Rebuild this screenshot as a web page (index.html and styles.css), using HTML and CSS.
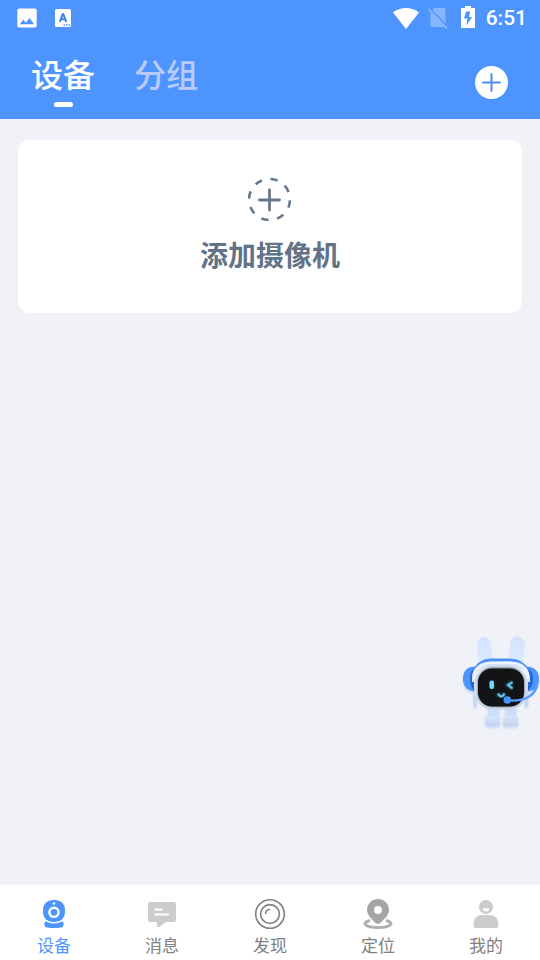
FILE: index.html
```html
<!DOCTYPE html>
<html lang="zh-CN">
<head>
<meta charset="utf-8">
<meta name="viewport" content="width=device-width, initial-scale=1">
<title>设备</title>
<link rel="stylesheet" href="styles.css">
</head>
<body>
<div class="app">
  <header class="header">
    <div class="status">
      <svg width="20" height="20" viewBox="0 0 20 20"><path fill="#fff" fill-rule="evenodd" d="M2 .5h16a1.700 1.700 0 0 1 1.700 1.700v15.600a1.700 1.700 0 0 1-1.700 1.700H2a1.700 1.700 0 0 1-1.700-1.700V2.200A1.700 1.700 0 0 1 2 .500zM2.800 16.200h14.400l-4.700-6.200-3.700 4.700-2.500-3z"/></svg>
      <svg class="lang-icon" width="16" height="18" viewBox="0 0 16 18"><rect width="16" height="18" rx="1.500" fill="#fff"/><path d="M4.800 12.800 7.700 5h.6l2.900 7.800M5.800 10.300h4.400" fill="none" stroke="#3f82e8" stroke-width="2" stroke-linejoin="bevel"/><path d="M8.500 16h1.500m1 0h1.500m1 0h1.500" stroke="#4d94ff" stroke-width="1.500"/></svg>
      <div class="status-right">
        <svg width="26" height="22" viewBox="0 0 26 22"><path fill="#fff" d="M0 5.500C7-.5 19-.5 26 5.500L13 22z"/></svg>
        <svg class="sim-icon" width="20" height="22" viewBox="0 0 20 22"><path fill="#fff" fill-opacity=".32" d="M6.500 1H16a1.500 1.500 0 0 1 1.500 1.500v14L4.500 3zM2.500 5.500 16.500 20H4a1.500 1.500 0 0 1-1.500-1.500z"/><path d="M.5 2 19 21.500" stroke="#fff" stroke-opacity=".4" stroke-width="1.500"/></svg>
        <svg width="14" height="24" viewBox="0 0 14 24"><path fill="#fff" fill-rule="evenodd" d="M4 0h6v2h4v20H0V2h4zM9 5.500H5L3 12.500h3.300l-.8 7L11 11H8z"/></svg>
        <span class="clock">6:51</span>
      </div>
    </div>
    <nav class="tabs">
      <button class="tab tab-active" type="button">设备</button>
      <button class="tab" type="button">分组</button>
      <button class="add" type="button" aria-label="添加">
        <svg width="33" height="33" viewBox="0 0 33 33"><circle cx="16.500" cy="16.500" r="16.500" fill="#fff"/><path d="M8 16.500h17M16.500 8v17" stroke="#4d8ff0" stroke-width="2" stroke-linecap="round"/></svg>
      </button>
    </nav>
  </header>
  <main class="content">
    <button class="card" type="button">
      <svg width="44" height="44" viewBox="0 0 44 44"><circle cx="21.500" cy="22.500" r="20.500" fill="none" stroke="#66788a" stroke-width="2.600" pathLength="80" stroke-dasharray="4.600 5.400" stroke-dashoffset="-.6"/><path d="M11.500 23h20M21.500 13v20" stroke="#66788a" stroke-width="2.800" stroke-linecap="round"/></svg>
      <span>添加摄像机</span>
    </button>
  </main>
  <button class="assistant" type="button" aria-label="客服">
    <svg width="90" height="110" viewBox="0 0 90 110">
      <defs>
        <linearGradient id="ear" x1="0" y1="0" x2="0" y2="1"><stop offset="0" stop-color="#d3e2fd"/><stop offset="1" stop-color="#dce9ff"/></linearGradient>
        <linearGradient id="foot" x1="0" y1="0" x2="0" y2="1"><stop offset="0" stop-color="#d6e5ff"/><stop offset="1" stop-color="#c3d3ee"/></linearGradient>
        <linearGradient id="helmet" x1="0" y1="0" x2="0" y2="1"><stop offset="0" stop-color="#cfdcf0"/><stop offset=".5" stop-color="#e6eefb"/><stop offset="1" stop-color="#d3e0f5"/></linearGradient>
        <filter id="soft" x="-30%" y="-30%" width="160%" height="160%"><feDropShadow dx="0" dy="2" stdDeviation="1.500" flood-color="#9fbdf0" flood-opacity=".5"/></filter>
        <filter id="edge"><feGaussianBlur stdDeviation=".8"/></filter>
      </defs>
      <g filter="url(#soft)">
        <path fill="url(#ear)" d="M28 18c0-8 12-8 12 0l2 20H30zM61 17c1-8 13-7 13 1l-3 20H60z"/>
        <rect x="38" y="80" width="11" height="14" fill="#cddefc"/><rect x="55" y="80" width="11" height="14" fill="#cddefc"/>
        <rect x="35" y="91" width="15" height="10" rx="3" fill="url(#foot)"/><rect x="53" y="91" width="15" height="10" rx="3" fill="url(#foot)"/>
        <path fill="#c5d5f0" d="M23.500 64v15q0 3 3 3V64zM78 64v15q0 3-3 3V64z"/>
        <path fill="#4d94ff" d="M25 41.500C15 42 13 48 13 54s3 12 12 12.500z"/>
        <path fill="#4d94ff" d="M77 41.500c9 .5 12 6.500 12 12.500s-3 12-12 12.500z"/>
      </g>
      <path fill="#2468d4" d="M24 43.500q-4 3-4 10.500t4 11.500zM78 43.500q5 3 5 10.500t-5 11.500z"/>
      <path d="M24 46C29 35.500 38 35 42 35H60C65 35 73 36 78 46" fill="none" stroke="#4b91fb" stroke-width="3"/>
      <rect x="24.500" y="38" width="53" height="46" rx="18" fill="#dce7fa" stroke="#c8d6ee" stroke-width="1"/>
      <path fill="url(#helmet)" d="M22 57V54C22 41 32 36.500 41 36.500H61C71 36.500 80 42 80 54V57H75V52C73 43 66 41 60 41H42C34 41 28 44 27 52V57z"/>
      <path d="M24 54C24 42 33 38 42 38H60C69 38 78 42 78 54" fill="none" stroke="#eff5ff" stroke-width="2"/>
      <rect x="27.500" y="42.500" width="47" height="39.500" rx="15" fill="#70767e" filter="url(#edge)"/>
      <rect x="28" y="43.500" width="46" height="38" rx="14" fill="#121416"/>
      <g stroke="#357d9d" stroke-width="3" fill="none" filter="url(#edge)"><path d="M42 57v6M62.500 57l-4.500 3 4.500 3.500M48 68.500c2 4 4.500 4 6.500 0"/></g>
      <rect x="39.500" y="55.500" width="4.500" height="8.500" rx="2" fill="#75d5fb"/>
      <path d="m62.500 57-4.500 3 4.500 3.500M48 68.500c2 4 4.500 4 6.500 0" fill="none" stroke="#66cdf5" stroke-width="1.800"/>
      <path d="M57 75.500c15 1 28-3 30.500-17" fill="none" stroke="#5b9cff" stroke-width="2.400"/><circle cx="57.300" cy="75" r="3.800" fill="#4991fb"/>
    </svg>
  </button>
  <nav class="bottom">
    <a class="item item-active" href="#device">
      <svg width="32" height="32" viewBox="0 0 32 32"><rect x="5" y="2" width="22" height="22" rx="9.500" fill="#4d94ff"/><circle cx="16" cy="14.300" r="4.600" fill="none" stroke="#fff" stroke-width="2.400"/><circle cx="16" cy="5.500" r="1.300" fill="#fff"/><path fill="#4d94ff" d="M7.800 23.500q8.200 4 16.400 0 1.500 0 1.500 3-.2 2.500-2.700 3-7 1-14 0-2.500-.5-2.700-3 0-3 1.500-3z"/></svg>
      <span>设备</span>
    </a>
    <a class="item" href="#message">
      <svg width="32" height="32" viewBox="0 0 32 32"><path fill="#ccc" d="M4 4h24q2 0 2 2v16q0 2-2 2h-8l-6 4.500q-3 1.500-3-1V24H4q-2 0-2-2V6q0-2 2-2z"/><path d="M9 11.500h7M9 16.500h13" stroke="#fff" stroke-width="2" stroke-linecap="round"/></svg>
      <span>消息</span>
    </a>
    <a class="item" href="#discover">
      <svg width="32" height="32" viewBox="0 0 32 32" fill="none" stroke="#808080" stroke-width="1.600"><circle cx="16" cy="16" r="14.300"/><circle cx="16" cy="16" r="9.400"/><path d="M11.500 16q0-4 4.500-4.700"/></svg>
      <span>发现</span>
    </a>
    <a class="item" href="#location">
      <svg width="32" height="32" viewBox="0 0 32 32"><path d="M8 22.500C-1 24.500 3 29.500 16 29.500s17-5 8-7" fill="none" stroke="#acaeb0" stroke-width="3"/><path fill="#a3a5a7" fill-rule="evenodd" d="M16 1a11 11 0 0 1 11 11c0 5.500-5 9.500-8.800 13q-2.200 2-4.400 0C10 21.500 5 17.500 5 12A11 11 0 0 1 16 1zm0 7a4 4 0 1 0 0 8 4 4 0 0 0 0-8z"/></svg>
      <span>定位</span>
    </a>
    <a class="item" href="#mine">
      <svg width="32" height="32" viewBox="0 0 32 32" fill="#ccc"><circle cx="16" cy="9" r="7"/><path fill="#fff" d="M12.800 10.200h6.400q-.2 3.300-3.200 3.300t-3.200-3.300z"/><path d="M12 17h8q8.500 0 8.500 10 0 3-2.500 3H6q-2.500 0-2.500-3 0-10 8.500-10z"/></svg>
      <span>我的</span>
    </a>
  </nav>
</div>
</body>
</html>
```
FILE: styles.css
```css
* {
  box-sizing: border-box;
}

body {
  margin: 0;
  background: #f0f2f8;
  font-family: "Noto Sans CJK SC", sans-serif;
}

button {
  padding: 0;
  border: 0;
  background: none;
  font: inherit;
  color: inherit;
}

svg {
  display: block;
}

.app {
  display: flex;
  flex-direction: column;
  min-height: 100vh;
  position: relative;
}

.header {
  background: #4d94ff;
  color: #fff;
}

.status {
  display: flex;
  align-items: center;
  height: 36px;
  padding: 0 13px 0 17px;
}

.lang-icon {
  margin-left: 18px;
}

.status-right {
  display: flex;
  align-items: center;
  margin-left: auto;
}

.sim-icon {
  margin: 0 13px 0 9px;
}

.clock {
  margin-left: 11px;
  font: 500 21px/36px Roboto, sans-serif;
}

.tabs {
  display: flex;
  align-items: flex-start;
  gap: 39px;
  padding: 14px 32px 12px 31px;
}

.tab {
  display: flex;
  flex-direction: column;
  align-items: center;
  font-size: 32px;
  font-weight: 500;
  line-height: 46px;
  color: #b8cbfb;
}

.tab-active {
  color: #fff;
}

.tab-active::after {
  content: "";
  width: 19px;
  height: 5px;
  margin-top: 6px;
  border-radius: 3px;
  background: #fff;
}

.add {
  margin: 16px 0 0 auto;
}

.content {
  flex: 1;
  padding: 21px 18px;
}

.card {
  display: flex;
  flex-direction: column;
  align-items: center;
  gap: 12px;
  width: 100%;
  padding: 37px 0 38px;
  border-radius: 12px;
  background: #fff;
  color: #627386;
  font-size: 28px;
  font-weight: 700;
  line-height: 42px;
}

.assistant {
  position: absolute;
  right: 0;
  bottom: 225px;
}

.bottom {
  display: flex;
  background: #fff;
  border-top: 1px solid #f4f5f8;
}

.item {
  flex: 1;
  display: flex;
  flex-direction: column;
  align-items: center;
  gap: 3px;
  padding: 13px 0 3px;
  color: #808080;
  font-size: 17px;
  line-height: 24px;
  text-decoration: none;
}

.item-active {
  color: #4d94ff;
}
```
